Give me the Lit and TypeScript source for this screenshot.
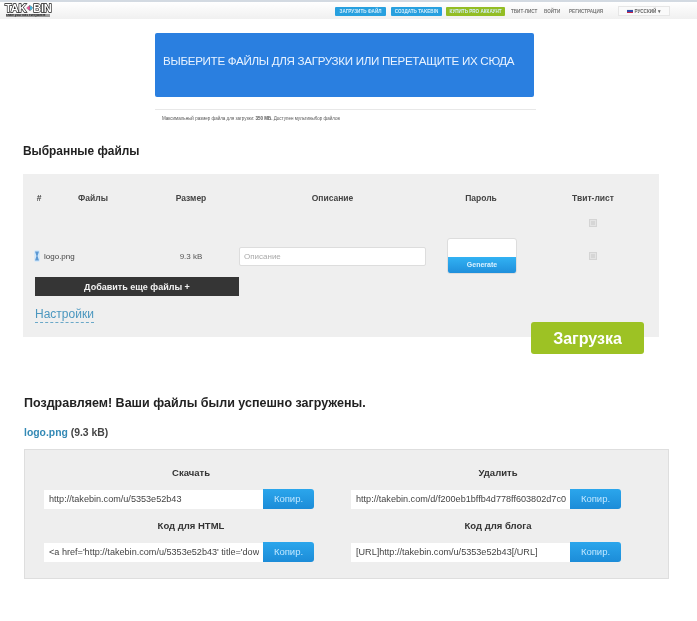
import { LitElement, html, css } from "lit";
import { customElement } from "lit/decorators.js";

@customElement("app-root")
export class AppRoot extends LitElement {
  static styles = css`
    :host { display: block; width: 697px; height: 621px; overflow: hidden; background: #fff; font-family: "Liberation Sans", Arial, sans-serif; color: #333; filter: blur(0.4px); }
    * { box-sizing: border-box; }
    .header { height: 19px; border-top: 2px solid #d3dae2; background: linear-gradient(#fff, #f0f0f0); display: flex; align-items: flex-start; padding-left: 5px; }
    .logo { width: 49px; height: 15px; display: flex; flex-direction: column; margin-top: 1px; }
    .logo-main { font-size: 11px; line-height: 10px; font-weight: 700; color: #fff; -webkit-text-stroke: 1.3px #111; paint-order: stroke fill; display: flex; align-items: center; letter-spacing: -0.2px; white-space: nowrap; }
    .logo-main svg { width: 7px; height: 8px; display: block; flex: none; }
    .logo-sub { width: 44px; margin: 1px 0 0 1px; font-size: 3px; line-height: 3px; font-weight: 700; color: #222; white-space: nowrap; overflow: hidden; background: #999; }
    .nav { margin-left: 281px; margin-top: 4px; display: flex; align-items: center; font-size: 4.6px; white-space: nowrap; }
    .nb { height: 9px; display: flex; align-items: center; justify-content: center; color: #d5eefc; border-radius: 1px; font-weight: 700; }
    .nb.u { width: 51px; background: #27a0df; margin-right: 5px; }
    .nb.c { width: 51px; background: #27a0df; margin-right: 4px; }
    .nb.p { width: 59px; background: #93bd24; margin-right: 6px; }
    .nt { color: #777; font-weight: 700; }
    .nt.a { width: 33px; } .nt.b { width: 25px; } .nt.d { width: 49px; }
    .lang { width: 52px; height: 10px; border: 1px solid #e6e6e6; background: #fafafa; display: flex; align-items: center; justify-content: center; gap: 1px; color: #666; font-weight: 700; }
    .flag { width: 6px; height: 4px; background: linear-gradient(#eee 33%, #3348a8 33% 66%, #c8264a 66%); display: block; }
    .hero { margin: 14px 0 0 155px; width: 379px; height: 64px; background: #2a7fe0; border-radius: 2px; color: #e9f3ff; font-size: 11.6px; letter-spacing: -0.3px; padding: 21px 0 0 8px; line-height: 14px; white-space: nowrap; }
    .rule { margin: 12px 0 0 155px; width: 381px; border-top: 1px solid #e8e8e8; }
    .note { margin: 5px 0 0 162px; font-size: 4.5px; line-height: 7px; color: #555; white-space: nowrap; }
    .h1 { margin: 21px 0 0 23px; font-size: 11.9px; line-height: 16px; font-weight: 700; color: #222; }
    .panel { position: relative; margin: 15px 0 0 23px; width: 636px; height: 163px; background: #efefef; padding: 16px 0 0 12px; }
    .grid { display: grid; grid-template-columns: 8px 100px 96px 187px 110px 114px; font-size: 8.5px; align-items: center; }
    .th { text-align: center; font-weight: 700; line-height: 16px; color: #444; }
    .tw { display: flex; justify-content: center; }
    .spacer { grid-column: 1 / 6; height: 9px; margin: 12px 0 11px; }
    .chk { margin: 12px 0 11px; }
    .box { width: 8px; height: 8px; background: #e4e4e4; border: 1px solid #d4d4d4; padding: 1px; }
    .box i { display: block; width: 100%; height: 100%; background: #d6d6d6; }
    .x { display: block; width: 6px; height: 12px; margin-left: -1px; }
    .fname { margin-left: -8px; padding-left: 9px; white-space: nowrap; color: #444; font-size: 8px; }
    .size { text-align: center; color: #555; font-size: 8px; }
    input { display: block; border: 0; outline: 0; font-family: inherit; background: #fff; margin: 0; }
    .desc { width: 187px; height: 19px; border: 1px solid #ddd; border-radius: 2px; font-size: 8px; padding: 0 4px; }
    .desc::placeholder { color: #aaa; opacity: 1; }
    .pw { width: 70px; height: 36px; margin-left: 21px; border-radius: 3px; border: 1px solid #ddd; overflow: hidden; background: #fff; display: flex; flex-direction: column; justify-content: flex-end; }
    .gen { height: 16px; background: linear-gradient(#32b2f3, #1f8fdb); color: #d8f0ff; font-size: 7px; font-weight: 700; text-align: center; line-height: 16px; }
    .add { margin-top: 3px; width: 204px; height: 19px; background: #353535; color: #f2f2f2; font-size: 9px; font-weight: 700; text-align: center; line-height: 20px; }
    .set { display: inline-block; margin-top: 10px; font-size: 12px; line-height: 16px; color: #4b97bf; border-bottom: 1px dashed #6aa8c8; }
    .go { position: absolute; right: 15px; top: 148px; width: 113px; height: 32px; background: #9dc224; border-radius: 3px; color: #fff; font-size: 16px; font-weight: 700; text-align: center; line-height: 33px; }
    .h2 { margin: 57px 0 0 24px; font-size: 12.5px; line-height: 18px; font-weight: 700; color: #222; white-space: nowrap; }
    .file { margin: 14px 0 0 24px; font-size: 10.4px; line-height: 14px; font-weight: 700; color: #444; }
    .file span { color: #3389b5; }
    .out { margin: 9px 0 0 24px; width: 645px; height: 130px; background: #eeeeee; border: 1px solid #dedede; padding: 16px 0 0 19px; display: grid; grid-template-columns: 270px 270px; column-gap: 37px; grid-auto-rows: min-content; }
    .cell { display: flex; flex-direction: column; }
    .cell:nth-child(n + 3) { margin-top: 10px; }
    .lbl { padding-left: 24px; text-align: center; font-size: 9.5px; line-height: 14px; font-weight: 700; color: #333; margin-bottom: 9px; }
    .cp { display: flex; height: 20px; }
    .cp input { width: 219px; height: 19px; margin-top: 0.5px; font-size: 9.1px; color: #444; padding: 0 4px 0 5px; }
    .btn { width: 51px; height: 20px; background: linear-gradient(#2ba6ec, #1c8cd8); border-radius: 0 3px 3px 0; color: #bfe6ff; font-size: 9.5px; text-align: center; line-height: 20px; }
  `;

  private copy(label: string, value: string) {
    return html`<div class="cell">
      <div class="lbl">${label}</div>
      <div class="cp"><input .value=${value} readonly /><div class="btn">Копир.</div></div>
    </div>`;
  }

  render() {
    return html`
      <div class="header">
        <div class="logo">
          <div class="logo-main">TAK<svg viewBox="0 0 10 9"><path d="M5 1 1 4.5 5 8V6h3V3H5z" fill="#e8559a" stroke="#111" stroke-width=".6"/><path d="M6 1l3.5 3.5L6 8z" fill="#3cc4ee" stroke="#111" stroke-width=".6"/></svg>BIN</div>
          <div class="logo-sub">share your files everywhere</div>
        </div>
        <div class="nav">
          <div class="nb u">ЗАГРУЗИТЬ ФАЙЛ</div>
          <div class="nb c">СОЗДАТЬ TAKEBIN</div>
          <div class="nb p">КУПИТЬ PRO АККАУНТ</div>
          <div class="nt a">ТВИТ-ЛИСТ</div>
          <div class="nt b">ВОЙТИ</div>
          <div class="nt d">РЕГИСТРАЦИЯ</div>
          <div class="lang"><span class="flag"></span>РУССКИЙ ▾</div>
        </div>
      </div>

      <div class="hero">ВЫБЕРИТЕ ФАЙЛЫ ДЛЯ ЗАГРУЗКИ ИЛИ ПЕРЕТАЩИТЕ ИХ СЮДА</div>
      <div class="rule"></div>
      <div class="note">Максимальный размер файла для загрузки: <b>350 МБ.</b> Доступен мультивыбор файлов</div>

      <div class="h1">Выбранные файлы</div>
      <div class="panel">
        <div class="grid">
          <div class="th">#</div><div class="th">Файлы</div><div class="th">Размер</div><div class="th">Описание</div><div class="th">Пароль</div><div class="th">Твит-лист</div>
          <div class="spacer"></div>
          <div class="tw chk"><span class="box"><i></i></span></div>
          <svg class="x" viewBox="0 0 6 12"><rect width="6" height="12" rx="2" fill="#d5e8f8"/><path d="M1 1.5h4L3.5 6 5 10.5H1L2.5 6z" fill="#5a98d4"/></svg>
          <div class="fname">logo.png</div>
          <div class="size">9.3 kB</div>
          <input class="desc" placeholder="Описание" />
          <div class="pw"><div class="gen">Generate</div></div>
          <div class="tw"><span class="box"><i></i></span></div>
        </div>
        <div class="add">Добавить еще файлы +</div>
        <a class="set">Настройки</a>
        <div class="go">Загрузка</div>
      </div>

      <div class="h2">Поздравляем! Ваши файлы были успешно загружены.</div>
      <div class="file"><span>logo.png</span> (9.3 kB)</div>
      <div class="out">
        ${this.copy("Скачать", "http://takebin.com/u/5353e52b43")}
        ${this.copy("Удалить", "http://takebin.com/d/f200eb1bffb4d778ff603802d7c0e1a5")}
        ${this.copy("Код для HTML", "<a href='http://takebin.com/u/5353e52b43' title='download'>logo.png</a>")}
        ${this.copy("Код для блога", "[URL]http://takebin.com/u/5353e52b43[/URL]")}
      </div>
    `;
  }
}
